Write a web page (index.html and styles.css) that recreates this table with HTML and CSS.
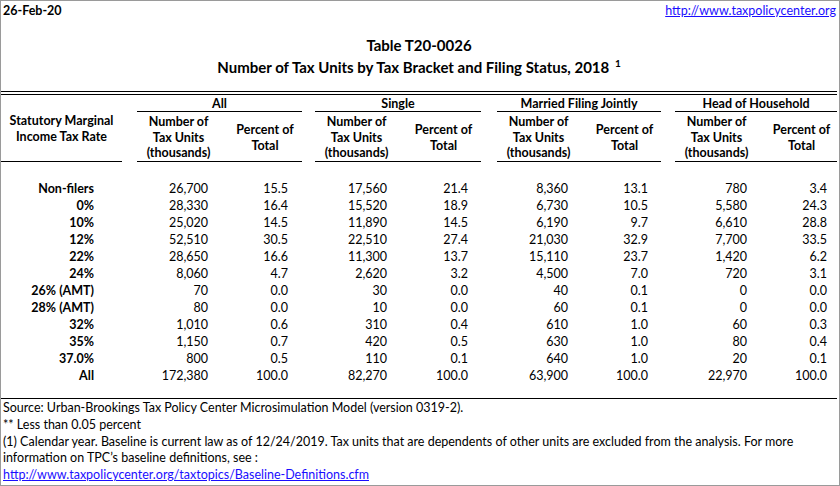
FILE: index.html
```html
<!DOCTYPE html>
<html lang="en">
<head>
<meta charset="utf-8">
<title>Table T20-0026</title>
<link rel="stylesheet" href="styles.css">
</head>
<body>
<div class="frame">
  <div class="inner">
    <div class="topbar">
      <span class="date">26-Feb-20</span>
      <a class="link" href="#">http://www.taxpolicycenter.org</a>
    </div>
    <div class="title">
      <div class="title-line">Table T20-0026</div>
      <div class="title-line">Number of Tax Units by Tax Bracket and Filing Status, 2018 <sup class="note">1</sup></div>
    </div>
    <div class="rule-double"></div>
    <table class="data">
      <colgroup>
        <col class="c-rate"><col class="c-gap1">
        <col class="c-n"><col class="c-p1">
        <col class="c-gap2">
        <col class="c-n"><col class="c-p2">
        <col class="c-gap3">
        <col class="c-n"><col class="c-p3">
        <col class="c-gap4">
        <col class="c-n"><col class="c-p4">
      </colgroup>
      <thead>
        <tr class="groups">
          <th class="rate" rowspan="2">Statutory Marginal<br>Income Tax Rate</th>
          <th class="gap"></th>
          <th class="grp" colspan="2">All</th>
          <th class="gap"></th>
          <th class="grp" colspan="2">Single</th>
          <th class="gap"></th>
          <th class="grp" colspan="2">Married Filing Jointly</th>
          <th class="gap"></th>
          <th class="grp" colspan="2">Head of Household</th>
        </tr>
        <tr class="subs">
          <th class="gap"></th>
          <th class="sub">Number of<br>Tax Units<br>(thousands)</th>
          <th class="sub pct">Percent of<br>Total</th>
          <th class="gap"></th>
          <th class="sub">Number of<br>Tax Units<br>(thousands)</th>
          <th class="sub pct">Percent of<br>Total</th>
          <th class="gap"></th>
          <th class="sub">Number of<br>Tax Units<br>(thousands)</th>
          <th class="sub pct">Percent of<br>Total</th>
          <th class="gap"></th>
          <th class="sub">Number of<br>Tax Units<br>(thousands)</th>
          <th class="sub pct">Percent of<br>Total</th>
        </tr>
      </thead>
      <tbody>
        <tr class="spacer"><td colspan="13"></td></tr>
        <tr><th class="lab">Non-filers</th><td></td><td class="n">26,700</td><td class="p1">15.5</td><td></td><td class="n2">17,560</td><td class="p2">21.4</td><td></td><td class="n">8,360</td><td class="p2">13.1</td><td></td><td class="n2">780</td><td class="p4">3.4</td></tr>
        <tr><th class="lab">0%</th><td></td><td class="n">28,330</td><td class="p1">16.4</td><td></td><td class="n2">15,520</td><td class="p2">18.9</td><td></td><td class="n">6,730</td><td class="p2">10.5</td><td></td><td class="n2">5,580</td><td class="p4">24.3</td></tr>
        <tr><th class="lab">10%</th><td></td><td class="n">25,020</td><td class="p1">14.5</td><td></td><td class="n2">11,890</td><td class="p2">14.5</td><td></td><td class="n">6,190</td><td class="p2">9.7</td><td></td><td class="n2">6,610</td><td class="p4">28.8</td></tr>
        <tr><th class="lab">12%</th><td></td><td class="n">52,510</td><td class="p1">30.5</td><td></td><td class="n2">22,510</td><td class="p2">27.4</td><td></td><td class="n">21,030</td><td class="p2">32.9</td><td></td><td class="n2">7,700</td><td class="p4">33.5</td></tr>
        <tr><th class="lab">22%</th><td></td><td class="n">28,650</td><td class="p1">16.6</td><td></td><td class="n2">11,300</td><td class="p2">13.7</td><td></td><td class="n">15,110</td><td class="p2">23.7</td><td></td><td class="n2">1,420</td><td class="p4">6.2</td></tr>
        <tr><th class="lab">24%</th><td></td><td class="n">8,060</td><td class="p1">4.7</td><td></td><td class="n2">2,620</td><td class="p2">3.2</td><td></td><td class="n">4,500</td><td class="p2">7.0</td><td></td><td class="n2">720</td><td class="p4">3.1</td></tr>
        <tr><th class="lab">26% (AMT)</th><td></td><td class="n">70</td><td class="p1">0.0</td><td></td><td class="n2">30</td><td class="p2">0.0</td><td></td><td class="n">40</td><td class="p2">0.1</td><td></td><td class="n2">0</td><td class="p4">0.0</td></tr>
        <tr><th class="lab">28% (AMT)</th><td></td><td class="n">80</td><td class="p1">0.0</td><td></td><td class="n2">10</td><td class="p2">0.0</td><td></td><td class="n">60</td><td class="p2">0.1</td><td></td><td class="n2">0</td><td class="p4">0.0</td></tr>
        <tr><th class="lab">32%</th><td></td><td class="n">1,010</td><td class="p1">0.6</td><td></td><td class="n2">310</td><td class="p2">0.4</td><td></td><td class="n">610</td><td class="p2">1.0</td><td></td><td class="n2">60</td><td class="p4">0.3</td></tr>
        <tr><th class="lab">35%</th><td></td><td class="n">1,150</td><td class="p1">0.7</td><td></td><td class="n2">420</td><td class="p2">0.5</td><td></td><td class="n">630</td><td class="p2">1.0</td><td></td><td class="n2">80</td><td class="p4">0.4</td></tr>
        <tr><th class="lab">37.0%</th><td></td><td class="n">800</td><td class="p1">0.5</td><td></td><td class="n2">110</td><td class="p2">0.1</td><td></td><td class="n">640</td><td class="p2">1.0</td><td></td><td class="n2">20</td><td class="p4">0.1</td></tr>
        <tr><th class="lab">All</th><td></td><td class="n">172,380</td><td class="p1">100.0</td><td></td><td class="n2">82,270</td><td class="p2">100.0</td><td></td><td class="n">63,900</td><td class="p2">100.0</td><td></td><td class="n2">22,970</td><td class="p4">100.0</td></tr>
        <tr class="spacer-end"><td colspan="13"></td></tr>
      </tbody>
    </table>
    <div class="notes">
      <div class="note-line">Source: Urban-Brookings Tax Policy Center Microsimulation Model (version 0319-2).</div>
      <div class="note-line">** Less than 0.05 percent</div>
      <div class="note-line">(1) Calendar year. Baseline is current law as of 12/24/2019. Tax units that are dependents of other units are excluded from the analysis. For more</div>
      <div class="note-line">information on TPC’s baseline definitions, see :</div>
      <div class="note-line"><a class="link" href="#">http://www.taxpolicycenter.org/taxtopics/Baseline-Definitions.cfm</a></div>
    </div>
  </div>
</div>
</body>
</html>
```

FILE: styles.css
```css
* { box-sizing: border-box; }
html, body { margin: 0; padding: 0; background: #fff; }
body {
  font-family: Lato, "Open Sans", sans-serif;
  font-size: 12.5px;
  color: #000;
}
.frame {
  width: 840px;
  height: 486px;
  border: 1px solid #9a9a9a;
  overflow: hidden;
}
.inner { width: 836px; }
.topbar {
  display: flex;
  justify-content: space-between;
  align-items: center;
  height: 19px;
  line-height: 19px;
  padding: 0 1px 0 2px;
}
.date { font-weight: bold; }
.link { color: #1a0dff; text-decoration: underline; }
.title {
  margin-top: 14px;
  margin-bottom: 13px;
  text-align: center;
  font-weight: bold;
  font-size: 15px;
}
.title-line { height: 22px; line-height: 22px; white-space: nowrap; }
.note { font-size: 10px; vertical-align: 0; position: relative; top: -6px; margin-left: 2px; }
.rule-double { border-top: 4px double #000; }
.data {
  width: 836px;
  table-layout: fixed;
  border-collapse: separate;
  border-spacing: 0;
}
.c-rate { width: 121px; }
.c-gap1 { width: 15px; }
.c-gap2 { width: 13px; }
.c-gap3 { width: 16px; }
.c-gap4 { width: 14px; }
.c-n { width: 83px; }
.c-p1 { width: 82px; }
.c-p2 { width: 83px; }
.c-p3 { width: 81px; }
.c-p4 { width: 79px; }
.data th, .data td { padding: 0; white-space: nowrap; }
.data th { font-weight: bold; text-align: center; }
.rate {
  vertical-align: middle;
  line-height: 16px;
  padding-top: 2px !important;
  border-bottom: 1px solid #000;
}
.groups th { height: 17px; }
.grp {
  line-height: 15px;
  padding-top: 1px !important;
  border-bottom: 1px solid #000;
}
.subs th { height: 50px; line-height: 15.5px; padding-top: 2px !important; vertical-align: middle; }
.sub { border-bottom: 1px solid #000; }
.sub.pct { padding-left: 8px !important; }
.data tbody tr td, .data tbody tr th {
  height: 17px;
  line-height: 13px;
  padding-top: 3px;
  padding-bottom: 1px;
}
.data tbody tr.spacer td { padding: 0; height: 17px; }
.data tbody tr.spacer-end td { padding: 0; height: 15px; }
.lab { text-align: right !important; padding-right: 28px !important; }
.n { text-align: right; padding-right: 12px !important; }
.n2 { text-align: right; padding-right: 11px !important; }
.p1 { text-align: right; padding-right: 14px !important; }
.p2 { text-align: right; padding-right: 13px !important; }
.p4 { text-align: right; padding-right: 10px !important; }
.notes {
  border-top: 1px solid #000;
  padding: 1px 0 0 2px;
}
.note-line { height: 16.8px; line-height: 16.8px; white-space: nowrap; }
```
